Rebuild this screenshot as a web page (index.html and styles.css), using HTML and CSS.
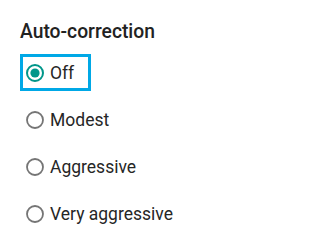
FILE: index.html
```html
<!DOCTYPE html>
<html>
<head>
<meta charset="utf-8">
<link rel="stylesheet" href="styles.css">
</head>
<body>
<div class="panel">
  <div class="title">Auto-correction</div>
  <div class="options">
    <div class="row focused">
      <svg class="radio" viewBox="0 0 18 18" width="18" height="18"><circle cx="9" cy="9" r="8" fill="none" stroke="#00968a" stroke-width="2"/><circle cx="9" cy="9" r="4.6" fill="#00968a"/></svg>
      <span class="label">Off</span>
    </div>
    <div class="row">
      <svg class="radio" viewBox="0 0 18 18" width="18" height="18"><circle cx="9" cy="9" r="8" fill="none" stroke="#757575" stroke-width="1.8"/></svg>
      <span class="label">Modest</span>
    </div>
    <div class="row">
      <svg class="radio" viewBox="0 0 18 18" width="18" height="18"><circle cx="9" cy="9" r="8" fill="none" stroke="#757575" stroke-width="1.8"/></svg>
      <span class="label">Aggressive</span>
    </div>
    <div class="row">
      <svg class="radio" viewBox="0 0 18 18" width="18" height="18"><circle cx="9" cy="9" r="8" fill="none" stroke="#757575" stroke-width="1.8"/></svg>
      <span class="label">Very aggressive</span>
    </div>
  </div>
</div>
</body>
</html>
```
FILE: styles.css
```css
html, body {
  margin: 0;
  padding: 0;
  background: #ffffff;
}
body {
  width: 298px;
  height: 246px;
  overflow: hidden;
  font-family: Roboto, "Noto Sans", sans-serif;
  color: #212121;
}
.panel {
  padding: 19px 0 0 20px;
}
.title {
  font-size: 19.3px;
  font-weight: 500;
  line-height: 25px;
  color: #222222;
}
.options {
  margin-top: 10px;
  display: flex;
  flex-direction: column;
  align-items: flex-start;
  gap: 10px;
}
.row {
  display: flex;
  align-items: center;
  height: 31px;
  padding: 0 14px 0 3px;
  border: 3px solid transparent;
}
.row.focused {
  border-color: #00a8e6;
}
.radio {
  flex: none;
  display: block;
}
.label {
  margin-left: 6px;
  font-size: 17.5px;
  line-height: 20px;
  color: #262626;
}
```
